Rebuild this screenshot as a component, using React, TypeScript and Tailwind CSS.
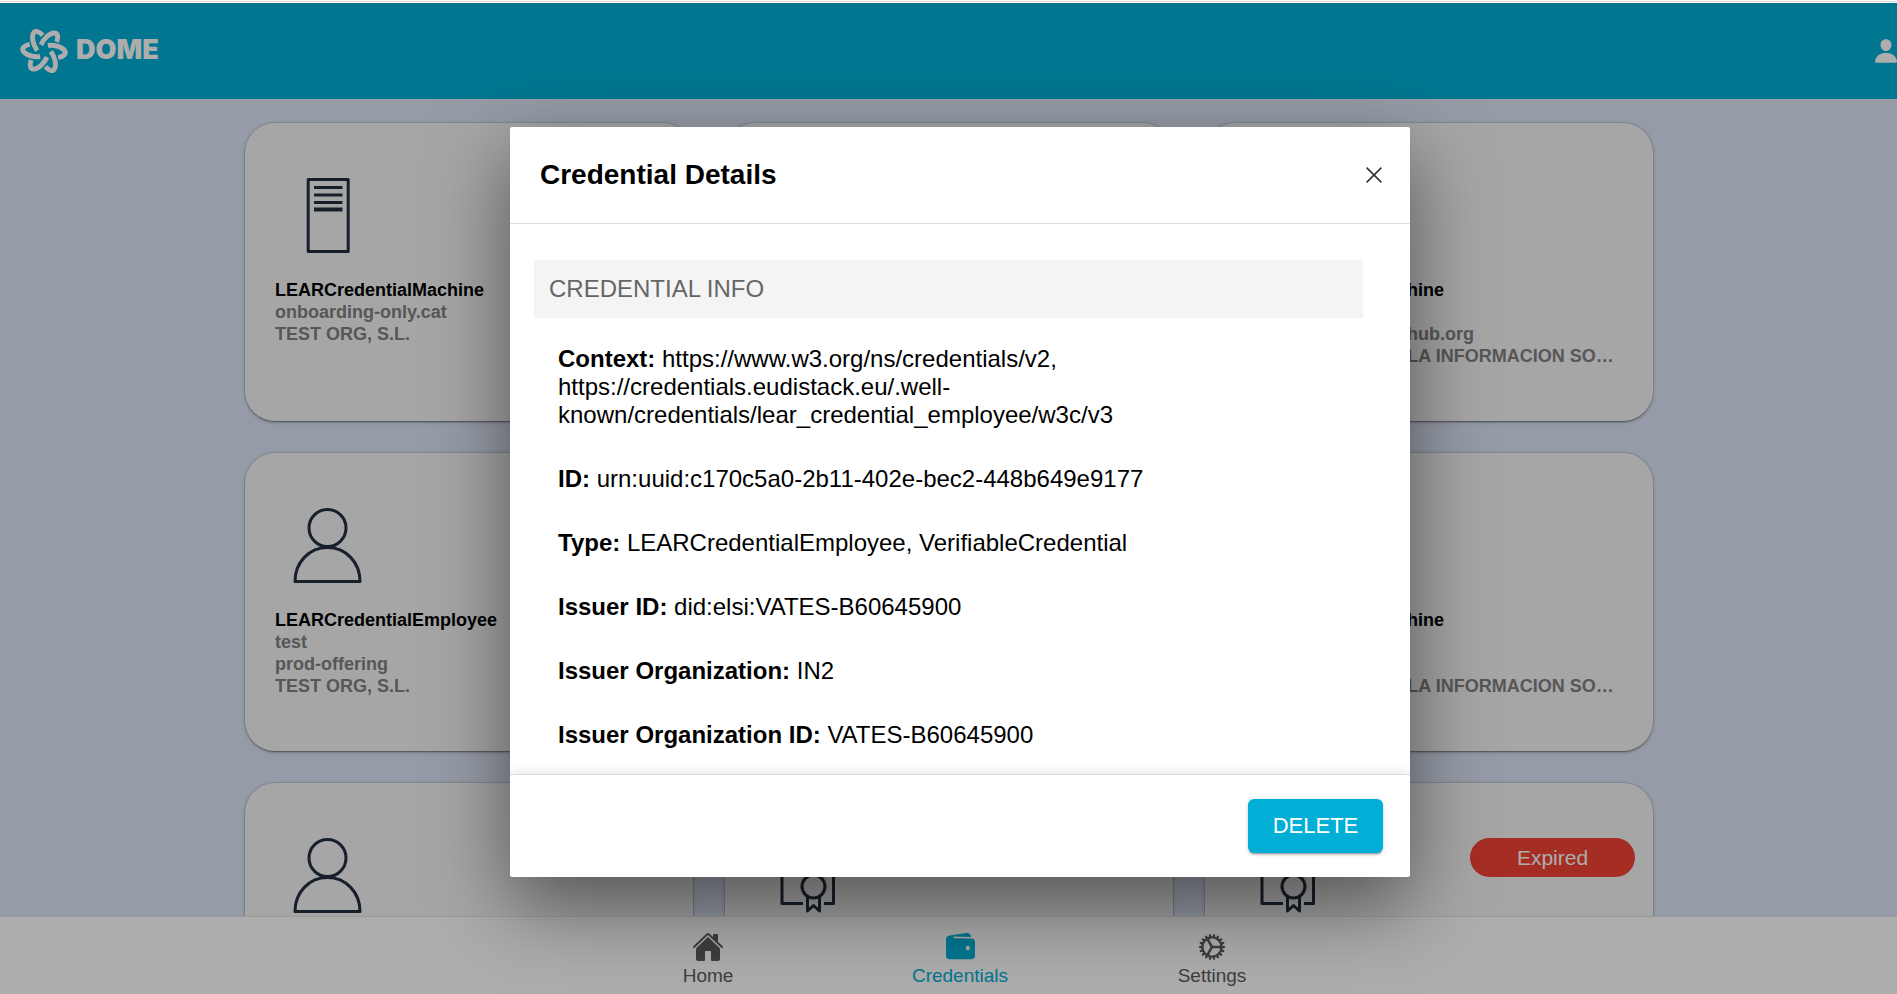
import type { ReactNode } from "react";
import { IoCog, IoHome } from "react-icons/io5";

type CredentialKind = "machine" | "employee" | "certificate";

interface Credential {
  kind: CredentialKind;
  title: string;
  lines: string[];
  expired?: boolean;
}

const IN2 = "IN2 INGENIERIA DE LA INFORMACION SOCIEDAD LIMITADA";

const credentials: Credential[] = [
  { kind: "machine", title: "LEARCredentialMachine", lines: ["onboarding-only.cat", "TEST ORG, S.L."] },
  { kind: "machine", title: "LEARCredentialMachine", lines: ["test", "TEST ORG, S.L."] },
  { kind: "machine", title: "LEARCredentialMachine", lines: ["test", "https://verifier.domehub.org", IN2] },
  { kind: "employee", title: "LEARCredentialEmployee", lines: ["test", "prod-offering", "TEST ORG, S.L."] },
  { kind: "employee", title: "LEARCredentialEmployee", lines: ["test", "prod-offering", "TEST ORG, S.L."] },
  { kind: "machine", title: "LEARCredentialMachine", lines: ["test", "test", IN2] },
  { kind: "employee", title: "LEARCredentialEmployee", lines: ["test", "TEST ORG, S.L."] },
  { kind: "certificate", title: "gx:LabelCredential", lines: ["test"] },
  { kind: "certificate", title: "gx:LabelCredential", lines: ["test"], expired: true },
];

const details: { label: string; value: string }[] = [
  {
    label: "Context:",
    value:
      "https://www.w3.org/ns/credentials/v2, https://credentials.eudistack.eu/.well-known/credentials/lear_credential_employee/w3c/v3",
  },
  { label: "ID:", value: "urn:uuid:c170c5a0-2b11-402e-bec2-448b649e9177" },
  { label: "Type:", value: "LEARCredentialEmployee, VerifiableCredential" },
  { label: "Issuer ID:", value: "did:elsi:VATES-B60645900" },
  { label: "Issuer Organization:", value: "IN2" },
  { label: "Issuer Organization ID:", value: "VATES-B60645900" },
];

function DomeMark() {
  return (
    <svg viewBox="-24 -22 48 44" className="h-11 w-12" fill="none" stroke="#fff" strokeWidth="4.9" aria-hidden="true">
      {[0, 60, 120, 180, 240, 300].map((angle) => (
        <path
          key={angle}
          transform={`rotate(${angle})`}
          d="M-14.200 -6.600C-19.500 -5.600 -22.800 -3 -20.600 .4C-18.200 4 -11 6.300 -3.800 5.700"
        />
      ))}
    </svg>
  );
}

function UserIcon() {
  return (
    <svg viewBox="48 32 416 448" className="h-6 w-[22px]" fill="#fff" aria-hidden="true">
      <path d="M332.64 64.58C313.18 43.57 286 32 256 32c-30.16 0-57.43 11.5-76.8 32.38-19.58 21.11-29.12 49.8-26.88 80.78C156.76 206.28 203.27 256 256 256s99.16-49.71 103.67-110.82c2.27-30.7-7.33-59.33-27.03-80.6zM432 480H80a31 31 0 0 1-24.2-11.13c-6.5-7.77-9.12-18.38-7.18-29.11C57.06 392.94 83.4 353.61 124.8 326c36.78-24.51 83.37-38 131.2-38s94.42 13.5 131.2 38c41.4 27.6 67.74 66.93 76.18 113.75 1.94 10.73-.68 21.34-7.18 29.11A31 31 0 0 1 432 480z" />
    </svg>
  );
}

function WalletIcon() {
  return (
    <svg viewBox="0 0 32 32" className="size-8" fill="currentColor" aria-hidden="true">
      <path
        d="M2 8.2C2 5.9 3.4 4.8 5.6 4.4L22.600 2.1C25 1.8 26.600 2.900 27.200 5.900L10.600 5.600C8.800 5.800 8.800 6.900 10.600 7.200L27.400 7.600C29.800 7.700 31 9 31 11.200V24.600C31 27 29.700 28.200 27.400 28.200H5.600C3.200 28.200 2 27 2 24.600ZM23.800 14.800A2 2.300 0 1 0 23.800 19.400A2 2.300 0 1 0 23.800 14.800Z"
        fillRule="evenodd"
      />
    </svg>
  );
}

function CredentialIcon({ kind }: { kind: CredentialKind }) {
  return (
    <svg viewBox="0 0 76 76" className="size-[76px]" fill="none" stroke="#232f3e" strokeWidth="3" strokeLinejoin="round" aria-hidden="true">
      {kind === "machine" && (
        <>
          <rect x="18.200" y="1.600" width="40" height="72" />
          <path d="M24 9.500H52.500M24 17H52.500M24 24.500H52.500" />
          <path d="M24 31.500H52.500" strokeWidth="4" />
        </>
      )}
      {kind === "employee" && (
        <>
          <circle cx="37.500" cy="20" r="18.500" />
          <path d="M5 73.500C5 54.500 19 39.500 37.500 39.500S70 54.500 70 73.500Z" />
        </>
      )}
      {kind === "certificate" && (
        <>
          <path d="M33 65.500H12V14H63.500V65.500H54" />
          <path d="M20 25H55M20 33H38" />
          <circle cx="43.500" cy="48.500" r="11.500" />
          <path d="M37.500 59V73L43.500 67.500L49.500 73V59" />
        </>
      )}
    </svg>
  );
}

function CredentialCard({ kind, title, lines, expired }: Credential) {
  return (
    <article className="h-[298px] rounded-[30px] bg-[#f5f5f5] pt-[55px] pr-[18px] pl-[30px] shadow-[0_3px_1px_-2px_rgba(0,0,0,0.2),0_2px_2px_0_rgba(0,0,0,0.14),0_1px_5px_0_rgba(0,0,0,0.12),0_0_0_1px_rgba(0,0,0,0.1)]">
      <div className="flex items-start justify-between pl-[15px]">
        <CredentialIcon kind={kind} />
        {expired && (
          <span className="w-[165px] rounded-full bg-[#f44336] text-center text-[21px] leading-[39px] text-white">
            Expired
          </span>
        )}
      </div>
      <h2 className="mt-[25px] text-lg leading-[22px] font-bold text-black">{title}</h2>
      <div className="pr-3 text-lg leading-[22px] font-bold text-[#808080]">
        {lines.map((line, i) => (
          <p key={i} className="truncate">
            {line}
          </p>
        ))}
      </div>
    </article>
  );
}

function TabButton({ label, active, children }: { label: string; active?: boolean; children: ReactNode }) {
  return (
    <button
      type="button"
      className={`flex w-[252px] flex-col items-center gap-0.5 text-[19px] leading-[22px] ${active ? "text-[#00aed4]" : "text-[#5c5c5c]"}`}
    >
      {children}
      <span>{label}</span>
    </button>
  );
}

export default function App() {
  return (
    <div className="flex h-screen flex-col overflow-hidden bg-white font-['Liberation_Sans',Arial,sans-serif]">
      <div className="h-[3px] shrink-0 bg-white pt-px">
        <div className="h-px bg-[#dedede]" />
      </div>
      <div className="relative flex min-h-0 flex-1 flex-col">
        <header className="flex h-24 shrink-0 items-center justify-between bg-[#00aed4] pl-5">
          <a href="#home" className="flex items-center gap-2 text-white">
            <DomeMark />
            <span className="pb-0.5 font-['Inter',sans-serif] text-[27px] leading-8 font-black">DOME</span>
          </a>
          <button type="button" aria-label="Account">
            <UserIcon />
          </button>
        </header>

        <main className="min-h-0 flex-1 overflow-hidden bg-[#dde6f6] pt-6 pl-px">
          <div className="mx-auto grid max-w-[1408px] grid-cols-3 gap-8">
            {credentials.map((credential, i) => (
              <CredentialCard key={i} {...credential} />
            ))}
          </div>
        </main>

        <nav className="flex h-[78px] shrink-0 justify-center border-t border-black/10 bg-white pt-[14px] pl-[23px]">
          <TabButton label="Home">
            <IoHome className="size-8" />
          </TabButton>
          <TabButton label="Credentials" active>
            <WalletIcon />
          </TabButton>
          <TabButton label="Settings">
            <IoCog className="size-8" />
          </TabButton>
        </nav>

        <div className="absolute inset-0 flex items-center justify-center bg-black/32 pt-[7px] pl-[23px]">
          <section
            role="dialog"
            aria-modal="true"
            aria-labelledby="dialog-title"
            className="flex h-[750px] w-[900px] flex-col overflow-hidden rounded-xs bg-white shadow-[0_28px_80px_rgba(0,0,0,0.5)]"
          >
            <header className="flex h-[97px] shrink-0 items-center justify-between border-b border-[#dcdcdc] pr-6 pl-[30px]">
              <h1 id="dialog-title" className="text-[28px] leading-8 font-bold text-black">
                Credential Details
              </h1>
              <button type="button" aria-label="Close" className="p-1">
                <svg viewBox="0 0 16 16" className="size-4" fill="none" stroke="#333" strokeWidth="1.6" aria-hidden="true">
                  <path d="M.6 .6L15.400 15.400M15.400 .6L.6 15.400" />
                </svg>
              </button>
            </header>

            <div className="min-h-0 flex-1 overflow-hidden pt-9 pr-[47px] pl-6 text-2xl leading-7 text-black">
              <h2 className="bg-[#f4f4f4] py-[15px] pl-[15px] text-[#666]">CREDENTIAL INFO</h2>
              <div className="flex flex-col gap-9 px-6 pt-[27px]">
                {details.map(({ label, value }) => (
                  <p key={label}>
                    <strong>{label}</strong> {value}
                  </p>
                ))}
              </div>
            </div>

            <footer className="relative flex h-[103px] shrink-0 items-center justify-end border-t border-[#dcdcdc] pr-[27px] shadow-[0_-2px_12px_rgba(0,0,0,0.1)]">
              <button
                type="button"
                className="h-[54px] w-[135px] rounded-md bg-[#00aed6] text-[22px] leading-7 text-white shadow-[0_3px_1px_-2px_rgba(0,0,0,0.2),0_2px_2px_0_rgba(0,0,0,0.14),0_1px_5px_0_rgba(0,0,0,0.12)]"
              >
                DELETE
              </button>
            </footer>
          </section>
        </div>
      </div>
    </div>
  );
}
